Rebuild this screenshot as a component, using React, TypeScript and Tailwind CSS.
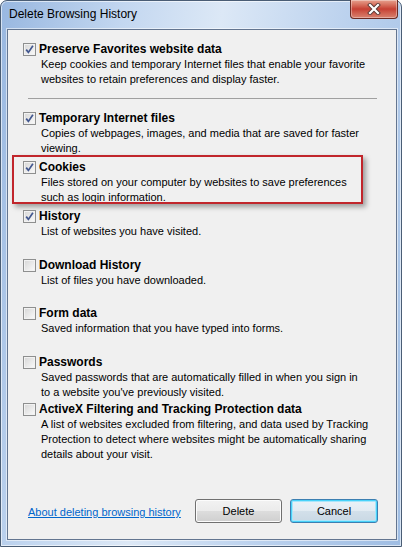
import React from "react";

interface Option {
  label: string;
  lines: string[];
  checked: boolean;
  height: string;
  marked?: boolean;
}

const options: Option[] = [
  {
    label: "Temporary Internet files",
    lines: ["Copies of webpages, images, and media that are saved for faster", "viewing."],
    checked: true,
    height: "h-[49px]",
  },
  {
    label: "Cookies",
    lines: ["Files stored on your computer by websites to save preferences", "such as login information."],
    checked: true,
    height: "h-[49px]",
    marked: true,
  },
  {
    label: "History",
    lines: ["List of websites you have visited."],
    checked: true,
    height: "h-[49px]",
  },
  {
    label: "Download History",
    lines: ["List of files you have downloaded."],
    checked: false,
    height: "h-[48px]",
  },
  {
    label: "Form data",
    lines: ["Saved information that you have typed into forms."],
    checked: false,
    height: "h-[49px]",
  },
  {
    label: "Passwords",
    lines: ["Saved passwords that are automatically filled in when you sign in", "to a website you've previously visited."],
    checked: false,
    height: "h-[47px]",
  },
  {
    label: "ActiveX Filtering and Tracking Protection data",
    lines: [
      "A list of websites excluded from filtering, and data used by Tracking",
      "Protection to detect where websites might be automatically sharing",
      "details about your visit.",
    ],
    checked: false,
    height: "",
  },
];

const CheckBox = ({ checked }: { checked: boolean }) => (
  <span className="flex h-[13px] w-[13px] shrink-0 items-center justify-center border border-[#8e8f8f] bg-gradient-to-br from-[#d6d6d6] to-[#fbfbfb] shadow-[inset_0_0_0_1px_#f2f2f2]">
    {checked && (
      <svg width="11" height="11" viewBox="0 0 11 11">
        <path d="M2.2 5.6 L4.4 8.4 L8.9 1.8" fill="none" stroke="#42578f" strokeWidth="1.7" />
      </svg>
    )}
  </span>
);

const Item = ({ opt }: { opt: Option }) => (
  <div className={`relative ${opt.height}`}>
    {opt.marked && (
      <div className="absolute -left-[11px] -top-[5px] h-[49px] w-[351px] border-2 border-[#c1262c] shadow-[3px_3px_5px_rgba(0,0,0,0.35)]" />
    )}
    <div className="flex h-[15px] items-center gap-[3px]">
      <CheckBox checked={opt.checked} />
      <span className="text-[12px] font-bold leading-[15px]">{opt.label}</span>
    </div>
    <div className="pl-[18px] text-[11px] leading-[15px]">
      {opt.lines.map((l) => (
        <div key={l}>{l}</div>
      ))}
    </div>
  </div>
);

export default function App() {
  return (
    <div className="h-[547px] w-[402px] font-['Liberation_Sans',Arial,sans-serif] text-black">
      <div className="flex h-full flex-col rounded-t-[7px] border border-[#4a5d75] bg-[linear-gradient(100deg,#98b7e0_0%,#c3d7f0_25%,#dce8f6_45%,#bcd2ee_70%,#9fbde3_100%)] pb-[6px] pl-[6px] pr-[4px] shadow-[inset_0_0_0_1px_rgba(255,255,255,0.6)]">
        <div className="flex h-[28px] items-start justify-between">
          <span className="pl-[2px] pt-[6px] text-[12px] leading-[15px]">Delete Browsing History</span>
          <div className="-mt-px mr-[-1px] flex h-[19px] w-[48px] items-center justify-center rounded-b-[4px] border border-t-0 border-[#6b2a22] bg-gradient-to-b from-[#e6a08e] via-[#c63f33] to-[#d8826f] shadow-[inset_0_0_0_1px_rgba(255,255,255,0.35)]">
            <svg width="14" height="12" viewBox="0 0 14 12">
              <path d="M3 2 L11 10 M11 2 L3 10" stroke="#5a3a36" strokeWidth="4" strokeLinecap="square" />
              <path d="M3 2 L11 10 M11 2 L3 10" stroke="#ffffff" strokeWidth="2.2" strokeLinecap="square" />
            </svg>
          </div>
        </div>
        <div className="flex flex-1 flex-col border border-[#637590] bg-[#f0f0f0] shadow-[0_0_0_1px_rgba(255,255,255,0.55)]">
          <div className="pl-[15px] pt-[12px]">
            <Item
              opt={{
                label: "Preserve Favorites website data",
                lines: [
                  "Keep cookies and temporary Internet files that enable your favorite",
                  "websites to retain preferences and display faster.",
                ],
                checked: true,
                height: "",
              }}
            />
            <div className="ml-[5px] mt-[11px] h-px w-[349px] bg-[#a0a0a0]" />
            <div className="mt-[12px]">
              {options.map((o) => (
                <Item key={o.label} opt={o} />
              ))}
            </div>
          </div>
          <div className="mt-auto flex items-center pb-[16px] pl-[20px] pr-[18px]">
            <a className="mt-[3px] text-[11px] leading-[15px] text-[#0066cc] underline">About deleting browsing history</a>
            <div className="ml-auto flex gap-[8px]">
              <button className="h-[24px] w-[87px] rounded-[3px] border border-[#707070] bg-[linear-gradient(#f2f2f2,#ebebeb_50%,#dddddd_50%,#cfcfcf)] text-[11px] shadow-[inset_0_0_0_1px_#fcfcfc]">
                Delete
              </button>
              <button className="h-[24px] w-[88px] rounded-[3px] border border-[#3c7fb1] bg-[linear-gradient(#eaf2f8,#e2ebf2_50%,#d3e0ea_50%,#c9d8e4)] text-[11px] shadow-[inset_0_0_0_1px_#48d2f9,inset_0_0_0_2px_#a8e6fb]">
                Cancel
              </button>
            </div>
          </div>
        </div>
      </div>
    </div>
  );
}
